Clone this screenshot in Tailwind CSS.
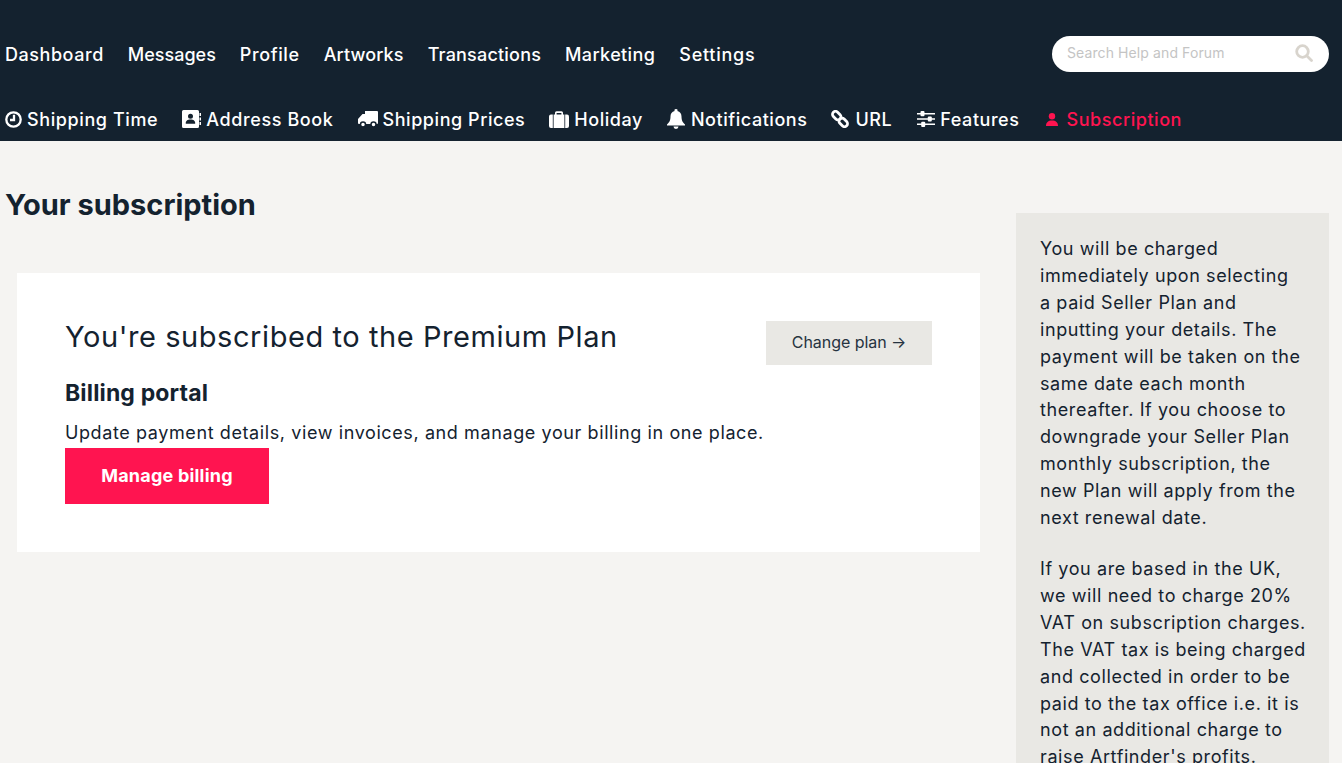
<!DOCTYPE html>
<html lang="en">
<head>
  <meta charset="UTF-8" />
  <title>Your subscription</title>
  <script src="https://cdn.jsdelivr.net/npm/@tailwindcss/browser@4"></script>
</head>
<body class="bg-[#f5f4f2] text-[#14222f] font-['Inter',sans-serif] h-[763px] overflow-hidden">

  <!-- header -->
  <header class="bg-[#14222f] h-[141px] text-white text-[18px] font-medium">
    <div class="flex items-center justify-between h-[108px] pl-[5px] pr-[13px]">
      <nav class="flex gap-[24px]">
        <a href="#" class="tracking-[0.55px]">Dashboard</a>
        <a href="#">Messages</a>
        <a href="#" class="tracking-[0.6px]">Profile</a>
        <a href="#" class="tracking-[0.13px]">Artworks</a>
        <a href="#" class="tracking-[0.2px]">Transactions</a>
        <a href="#" class="tracking-[0.38px]">Marketing</a>
        <a href="#" class="tracking-[0.75px]">Settings</a>
      </nav>
      <div class="flex items-center justify-between w-[277px] h-[36px] bg-white rounded-full pl-[15px] pr-[16px]">
        <span class="text-[14px] font-normal text-[#c4c4c4] tracking-[0.1px] -mt-[3px]">Search Help and Forum</span>
        <svg class="w-[18px] h-[18px] -mt-[3px]" viewBox="0 0 18 18" fill="none" stroke="#d8d4cd" stroke-width="2.8" stroke-linecap="round"><circle cx="7.500" cy="7.500" r="5.800"/><path d="M12 12l4.500 4.500"/></svg>
      </div>
    </div>
    <nav class="flex gap-[24px] pl-[5px] h-[33px] items-start -mt-[1px] tracking-[0.55px]">
      <a href="#" class="flex items-center gap-[5px] h-[24px] tracking-[0.6px]">
        <svg class="w-[17px] h-[17px]" viewBox="0 0 17 17" fill="none" stroke="white" stroke-width="2.300"><circle cx="8.500" cy="8.500" r="7.200"/><path d="M9 3.800v5.200H5"/></svg>
        Shipping Time
      </a>
      <a href="#" class="flex items-center gap-[5px] h-[24px] tracking-[0.62px]">
        <svg class="w-[19px] h-[18px]" viewBox="0 0 19 18" fill="white"><path fill-rule="evenodd" d="M1.500 0h14a1.500 1.500 0 0 1 1.500 1.500v15a1.500 1.500 0 0 1-1.500 1.500h-14A1.500 1.500 0 0 1 0 16.500v-15A1.500 1.500 0 0 1 1.500 0zM8.500 3.800a2.500 2.500 0 1 0 0 5a2.500 2.500 0 0 0 0-5zM3.800 13.800h9.400c.3-2.800-1.700-4.200-4.700-4.200s-5 1.400-4.700 4.200z"/><path d="M17.500 3h1.500v3h-1.500zM17.500 7.500h1.500v3h-1.500zM17.500 12h1.500v3h-1.500z"/></svg>
        Address Book
      </a>
      <a href="#" class="flex items-center gap-[5px] h-[24px]">
        <svg class="w-[20px] h-[17px]" viewBox="0 0 20 17" fill="white"><path d="M7 0h12a1 1 0 0 1 1 1v11a1 1 0 0 1-1 1H1a1 1 0 0 1-1-1V8l4.500-5H7z"/><circle cx="5" cy="13.500" r="2.500" stroke="#14222f" stroke-width="1.500"/><circle cx="15.500" cy="13.500" r="2.500" stroke="#14222f" stroke-width="1.500"/></svg>
        Shipping Prices
      </a>
      <a href="#" class="flex items-center gap-[5px] h-[24px]">
        <svg class="w-[20px] h-[17px]" viewBox="0 0 20 17" fill="white"><path d="M6 4V1.800A1.500 1.500 0 0 1 7.500.3h5A1.500 1.500 0 0 1 14 1.800V4h-1.600V2h-4.800v2z"/><path d="M16.200 3.500H18a2 2 0 0 1 2 2V15a2 2 0 0 1-2 2h-1.800z"/><path d="M3.800 3.500H2a2 2 0 0 0-2 2V15a2 2 0 0 0 2 2h1.800z"/><rect x="4.600" y="3.500" width="10.800" height="13.500"/></svg>
        Holiday
      </a>
      <a href="#" class="flex items-center gap-[6px] h-[24px]">
        <svg class="w-[18px] h-[20px]" viewBox="0 0 18 20" fill="white"><path d="M9 0a1.500 1.500 0 0 1 1.400 2c2.700.6 4.100 2.800 4.100 5.500 0 4.500 1.500 6 3.500 8v1H0v-1c2-2 3.500-3.500 3.500-8C3.500 4.800 4.900 2.600 7.600 2A1.500 1.500 0 0 1 9 0zM6.500 17.500h5a2.500 2.500 0 0 1-5 0z"/></svg>
        Notifications
      </a>
      <a href="#" class="flex items-center gap-[6px] h-[24px]">
        <svg class="w-[18px] h-[18px]" viewBox="0 0 18 18" fill="none" stroke="white" stroke-width="2.800"><rect x="1" y="2.500" width="9.500" height="6" rx="3" transform="rotate(45 5.700 5.500)"/><rect x="7.500" y="9.500" width="9.500" height="6" rx="3" transform="rotate(45 12.300 12.500)"/></svg>
        URL
      </a>
      <a href="#" class="flex items-center gap-[5px] h-[24px] ml-[1px]">
        <svg class="w-[18px] h-[16px]" viewBox="0 0 18 16" fill="white"><path d="M0 2h18v1.600H0zM0 7.200h18v1.600H0zM0 12.400h18V14H0z"/><rect x="3.500" y="0" width="4" height="5.200" rx="1"/><rect x="10.800" y="5.400" width="4" height="5.200" rx="1"/><rect x="4.200" y="10.800" width="4" height="5.200" rx="1"/></svg>
        Features
      </a>
      <a href="#" class="flex items-center gap-[8px] h-[24px] text-[#ff1450] ml-[3px]">
        <svg class="w-[12px] h-[13px]" viewBox="0 0 12 13" fill="#ff1450"><circle cx="6" cy="3.200" r="3.200"/><path d="M0 13c0-3.800 2.200-5.600 6-5.600s6 1.800 6 5.600z"/></svg>
        Subscription
      </a>
    </nav>
  </header>

  <main class="flex">
    <div class="w-[1016px] shrink-0">
      <h1 class="text-[29px] leading-[36px] font-bold ml-[5px] mt-[46px]">Your subscription</h1>
      <section class="bg-white w-[963px] h-[279px] ml-[17px] mt-[50px] p-[48px]">
        <div class="flex justify-between items-start">
          <h2 class="text-[29px] leading-[32px] tracking-[0.57px]">You're subscribed to the Premium Plan</h2>
          <a href="#" class="flex items-center justify-center w-[166px] h-[44px] bg-[#e9e8e4] text-[16px] -tracking-[0.05px] text-[#263340] pb-[2px]">Change plan →</a>
        </div>
        <h3 class="text-[23px] leading-[28px] font-bold tracking-[0.15px] mt-[14px] mb-[12px]">Billing portal</h3>
        <p class="text-[18px] leading-[27px] tracking-[0.6px] mb-[2px]">Update payment details, view invoices, and manage your billing in one place.</p>
        <a href="#" class="flex items-center justify-center w-[204px] h-[56px] bg-[#ff1450] text-white text-[18px] font-bold tracking-[0.2px] pb-[2px]">Manage billing</a>
      </section>
    </div>
    <aside class="w-[313px] bg-[#e9e8e4] mt-[72px] h-[600px] pl-[24px] pt-[23px] text-[18px] leading-[26.9px] tracking-[0.6px] whitespace-nowrap">
      <p class="mb-[24px]">You will be charged<br>immediately upon selecting<br>a paid Seller Plan and<br>inputting your details. The<br>payment will be taken on the<br>same date each month<br>thereafter. If you choose to<br>downgrade your Seller Plan<br>monthly subscription, the<br>new Plan will apply from the<br>next renewal date.</p>
      <p>If you are based in the UK,<br>we will need to charge 20%<br>VAT on subscription charges.<br>The VAT tax is being charged<br>and collected in order to be<br>paid to the tax office i.e. it is<br>not an additional charge to<br>raise Artfinder's profits.</p>
    </aside>
  </main>

</body>
</html>
